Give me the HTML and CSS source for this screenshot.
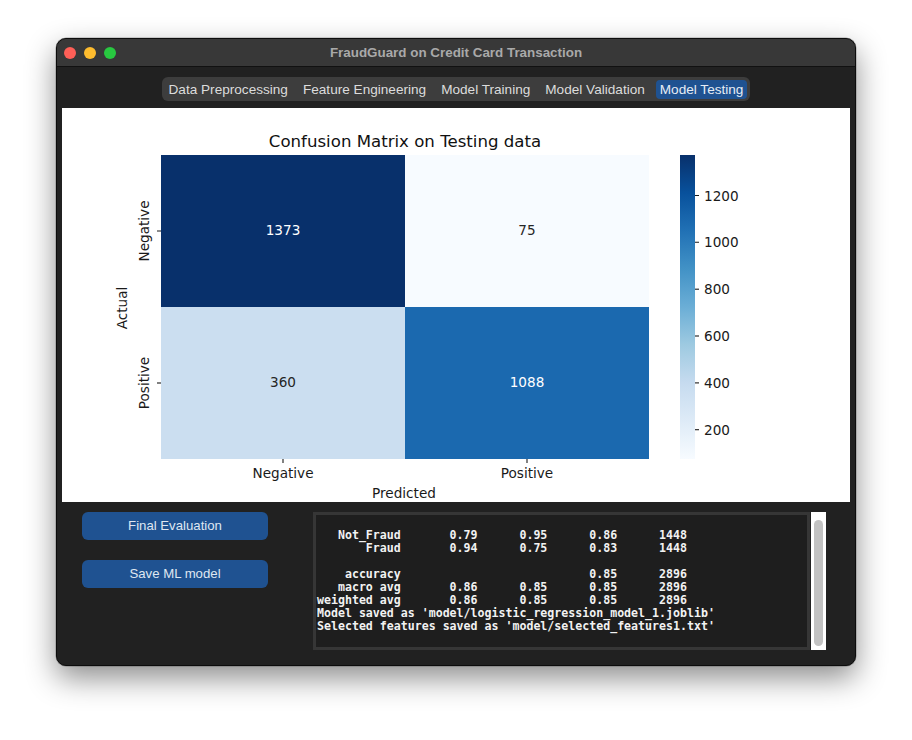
FILE: index.html
```html
<!DOCTYPE html>
<html>
<head>
<meta charset="utf-8">
<link rel="stylesheet" href="styles.css">
</head>
<body>
<div class="window">
  <div class="titlebar">
    <div class="lights">
      <span class="light red"></span><span class="light yellow"></span><span class="light green"></span>
    </div>
    <div class="title">FraudGuard on Credit Card Transaction</div>
    <div></div>
  </div>
  <div class="content">
    <div class="tabs-row">
      <div class="tabs">
        <div class="tab">Data Preprocessing</div>
        <div class="tab">Feature Engineering</div>
        <div class="tab">Model Training</div>
        <div class="tab">Model Validation</div>
        <div class="tab active">Model Testing</div>
      </div>
    </div>
    <div class="plot">
      <svg class="chart" width="788" height="394" viewBox="0 0 788 394" xmlns="http://www.w3.org/2000/svg">
        <defs>
          <linearGradient id="blues" x1="0" y1="1" x2="0" y2="0">
            <stop offset="0" stop-color="#f7fbff"/>
            <stop offset="0.125" stop-color="#deebf7"/>
            <stop offset="0.25" stop-color="#c6dbef"/>
            <stop offset="0.375" stop-color="#9ecae1"/>
            <stop offset="0.5" stop-color="#6baed6"/>
            <stop offset="0.625" stop-color="#4292c6"/>
            <stop offset="0.75" stop-color="#2171b5"/>
            <stop offset="0.875" stop-color="#08519c"/>
            <stop offset="1" stop-color="#08306b"/>
          </linearGradient>
        </defs>
        <text class="ctitle" x="343" y="39" text-anchor="middle">Confusion Matrix on Testing data</text>
        <rect x="99" y="47" width="244" height="152" fill="#08306b"/>
        <rect x="343" y="47" width="244" height="152" fill="#f7fbff"/>
        <rect x="99" y="199" width="244" height="152" fill="#cbdef0"/>
        <rect x="343" y="199" width="244" height="152" fill="#1b69af"/>
        <text class="cell light-t" x="221" y="127" text-anchor="middle">1373</text>
        <text class="cell dark-t" x="465" y="127" text-anchor="middle">75</text>
        <text class="cell dark-t" x="221" y="279" text-anchor="middle">360</text>
        <text class="cell light-t" x="465" y="279" text-anchor="middle">1088</text>
        <g class="ticks">
          <line x1="95" y1="123" x2="99" y2="123"/>
          <line x1="95" y1="275" x2="99" y2="275"/>
          <line x1="221" y1="351" x2="221" y2="355"/>
          <line x1="465" y1="351" x2="465" y2="355"/>
        </g>
        <text class="tick" transform="translate(87 123) rotate(-90)" text-anchor="middle">Negative</text>
        <text class="tick" transform="translate(87 275) rotate(-90)" text-anchor="middle">Positive</text>
        <text class="tick" transform="translate(65 200) rotate(-90)" text-anchor="middle">Actual</text>
        <text class="tick" x="221" y="370" text-anchor="middle">Negative</text>
        <text class="tick" x="465" y="370" text-anchor="middle">Positive</text>
        <text class="tick" x="342" y="390" text-anchor="middle">Predicted</text>
        <rect x="618" y="47" width="15" height="304" fill="url(#blues)"/>
        <g class="ticks">
          <line x1="633" y1="87.5" x2="637" y2="87.5"/>
          <line x1="633" y1="134.3" x2="637" y2="134.3"/>
          <line x1="633" y1="181.2" x2="637" y2="181.2"/>
          <line x1="633" y1="228" x2="637" y2="228"/>
          <line x1="633" y1="274.9" x2="637" y2="274.9"/>
          <line x1="633" y1="321.7" x2="637" y2="321.7"/>
        </g>
        <text class="tick" x="642" y="92.5">1200</text>
        <text class="tick" x="642" y="139.3">1000</text>
        <text class="tick" x="642" y="186.2">800</text>
        <text class="tick" x="642" y="233">600</text>
        <text class="tick" x="642" y="279.9">400</text>
        <text class="tick" x="642" y="326.7">200</text>
      </svg>
    </div>
    <div class="bottom">
      <div class="buttons">
        <div class="btn">Final Evaluation</div>
        <div class="btn">Save ML model</div>
      </div>
      <div class="console"><pre class="log">

   Not_Fraud       0.79      0.95      0.86      1448
       Fraud       0.94      0.75      0.83      1448

    accuracy                           0.85      2896
   macro avg       0.86      0.85      0.85      2896
weighted avg       0.86      0.85      0.85      2896
Model saved as 'model/logistic_regression_model_1.joblib'
Selected features saved as 'model/selected_features1.txt'</pre></div>
      <div class="scrollbar"><div class="thumb"></div></div>
    </div>
  </div>
</div>
</body>
</html>
```

FILE: styles.css
```css
html, body {
  margin: 0;
  padding: 0;
  background: #ffffff;
}

body {
  width: 912px;
  height: 740px;
  overflow: hidden;
  padding-top: 38px;
  padding-left: 56px;
  box-sizing: border-box;
}

.window {
  width: 800px;
  height: 628px;
  box-sizing: border-box;
  border: 1px solid #0c0c0c;
  border-radius: 10px;
  background: #212121;
  box-shadow: 0 12px 30px rgba(0, 0, 0, 0.45), 0 0 0 0.5px rgba(0,0,0,0.3);
  overflow: hidden;
  display: flex;
  flex-direction: column;
  font-family: "Liberation Sans", Arial, sans-serif;
}

.titlebar {
  height: 27px;
  flex: none;
  background: #383838;
  border-bottom: 1px solid #111111;
  display: grid;
  grid-template-columns: 1fr auto 1fr;
  align-items: center;
}

.lights {
  display: flex;
  gap: 8px;
  padding-left: 7px;
}

.light {
  width: 12px;
  height: 12px;
  border-radius: 50%;
  display: block;
}

.red { background: #fe5f57; }
.yellow { background: #febc2e; }
.green { background: #28c840; }

.title {
  color: #a9a9a9;
  font-weight: bold;
  font-size: 13.4px;
}

.content {
  flex: 1;
  display: flex;
  flex-direction: column;
}

.tabs-row {
  display: flex;
  justify-content: center;
  margin-top: 10px;
}

.tabs {
  display: flex;
  gap: 7px;
  padding: 3px 3px 2px 3px;
  height: 19px;
  background: #3d3d3d;
  border-radius: 6px;
}

.tab {
  padding: 0 4px;
  height: 19px;
  line-height: 19px;
  font-size: 13.6px;
  color: #dcdcdc;
  border-radius: 4px;
  white-space: nowrap;
}

.tab.active {
  background: #1f5291;
  color: #e6edf5;
}

.plot {
  margin: 7px 5px 0 5px;
  height: 394px;
  background: #ffffff;
}

.chart {
  display: block;
  font-family: "DejaVu Sans", sans-serif;
}

.ctitle {
  font-size: 16.6px;
  fill: #111111;
}

.cell {
  font-size: 13.6px;
}

.light-t { fill: #ffffff; }
.dark-t { fill: #262626; }

.tick {
  font-size: 13.6px;
  fill: #1a1a1a;
}

.ticks line {
  stroke: #1a1a1a;
  stroke-width: 1.1;
}

.bottom {
  display: flex;
  align-items: flex-start;
  padding-top: 10px;
  padding-left: 25px;
}

.buttons {
  width: 186px;
  display: flex;
  flex-direction: column;
  gap: 20px;
}

.btn {
  height: 28px;
  line-height: 28px;
  border-radius: 6px;
  background: #1f5291;
  color: #dfe7f1;
  font-size: 13.2px;
  text-align: center;
}

.console {
  margin-left: 45px;
  width: 497px;
  height: 138px;
  box-sizing: border-box;
  border: 3px solid #363636;
  background: #1e1e1e;
  overflow: hidden;
  padding: 1px 1px;
}

.log {
  margin: 0;
  font-family: "DejaVu Sans Mono", monospace;
  font-weight: bold;
  font-size: 11.6px;
  line-height: 13px;
  color: #f2f2f2;
  white-space: pre;
}

.scrollbar {
  margin-left: 1px;
  width: 15px;
  height: 138px;
  background: #ffffff;
  box-sizing: border-box;
  padding: 8px 3px 4px 3px;
}

.thumb {
  width: 9px;
  height: 126px;
  border-radius: 5px;
  background: #c2c2c2;
}
```
